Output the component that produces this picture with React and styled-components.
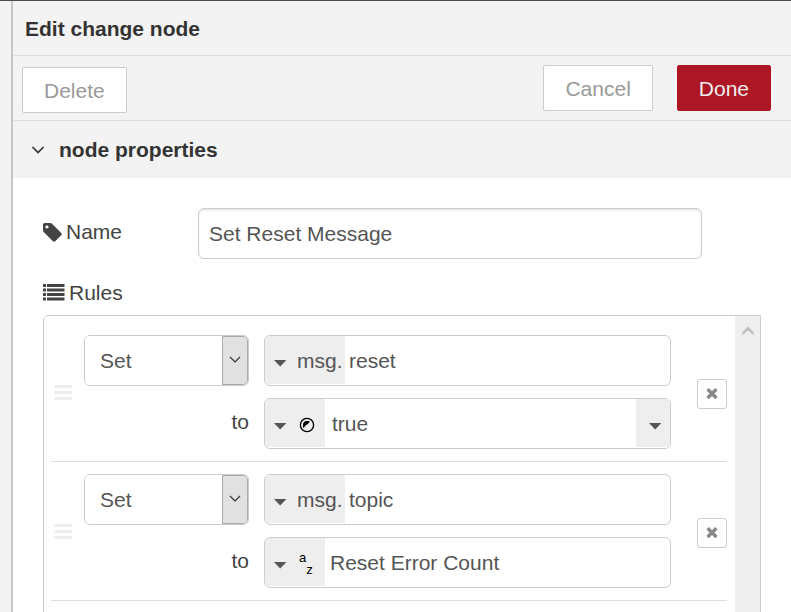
import React, { useState } from "react";
import styled, { createGlobalStyle } from "styled-components";

const GlobalStyle = createGlobalStyle`
  *, *::before, *::after { box-sizing: border-box; }
  body {
    margin: 0;
    background: #fff;
    color: #444;
    font-family: "Liberation Sans", Arial, Helvetica, sans-serif;
    font-size: 21px;
    line-height: 30px;
  }
  button, input, select { font: inherit; color: inherit; margin: 0; }
`;

const Page = styled.div`
  display: flex;
  height: 100vh;
  overflow: hidden;
  border-top: 1px solid #504b50;
`;

const Gutter = styled.div`
  flex: none;
  width: 13px;
  background: #f2f2f2;
  border-right: 2px solid #c6c6c6;
`;

const Tray = styled.main`
  flex: 1;
  min-width: 0;
`;

const TrayHeader = styled.h1`
  margin: 0;
  padding: 13px 12px 11px;
  background: #f3f3f3;
  border-bottom: 1px solid #ddd;
  color: #333;
  font-size: 21px;
  line-height: 30px;
`;

const Toolbar = styled.div`
  display: flex;
  justify-content: space-between;
  align-items: flex-end;
  padding: 9px 20px 7px 9px;
  background: #f3f3f3;
  border-bottom: 1px solid #ddd;
`;

const ToolbarGroup = styled.div`
  display: flex;
  gap: 24px;
  padding-bottom: 2px;
`;

const ToolbarButton = styled.button`
  height: 46px;
  padding: 1px 21px 0;
  border: 1px solid ${(p) => (p.$primary ? "#ad1625" : "#ccc")};
  border-radius: 2px;
  background: ${(p) => (p.$primary ? "#ad1625" : "#fff")};
  color: ${(p) => (p.$primary ? "#eee" : "#999")};
  cursor: pointer;
`;

const SectionToggle = styled.button`
  display: flex;
  align-items: center;
  gap: 14px;
  width: 100%;
  height: 57px;
  padding: 0 18px;
  border: 0;
  background: #f3f3f3;
  color: #333;
  font-weight: bold;
  text-align: left;
  cursor: pointer;
`;

const Form = styled.form`
  padding: 30px 30px 0;
`;

const FormRow = styled.div`
  display: flex;
  justify-content: space-between;
  padding-right: 59px;
`;

const FieldLabel = styled.label`
  display: flex;
  align-items: center;
  gap: 4px;
  height: 48px;
`;

const NameInput = styled.input`
  width: 504px;
  max-width: 78%;
  height: 51px;
  padding: 0 10px;
  border: 1px solid #ccc;
  border-radius: 6px;
  box-shadow: inset 0 2px 2px rgba(0, 0, 0, 0.08);
  color: #555;
  outline: none;
`;

const RulesTitle = styled.h2`
  display: flex;
  align-items: center;
  gap: 4px;
  margin: 19px 0 7px;
  font-size: 21px;
  font-weight: normal;
  line-height: 30px;
`;

const RulesBox = styled.div`
  display: flex;
  border: 1px solid #ccc;
  border-radius: 6px 0 0 6px;
  min-height: 400px;
`;

const RuleList = styled.ol`
  flex: 1;
  min-width: 0;
  margin: 0;
  padding: 7px 8px 7px 7px;
  list-style: none;
`;

const ScrollTrack = styled.div`
  flex: none;
  display: flex;
  justify-content: center;
  align-items: flex-start;
  width: 25px;
  padding-top: 9px;
  background: #efefef;
`;

const Rule = styled.li`
  display: grid;
  grid-template-columns: 18px 165px minmax(0, 1fr) 30px;
  align-items: center;
  padding: 12px 0 12px 3px;
  border-bottom: 1px solid #ddd;
`;

const Handle = styled.span`
  display: grid;
  gap: 3px;
  cursor: move;

  i {
    height: 3px;
    background: #eee;
  }
`;

const RuleAction = styled.div`
  display: grid;
  gap: 12px;
  margin: 0 -12px 0 12px;
`;

const RuleTargets = styled.div`
  display: grid;
  gap: 12px;
  margin: 0 26px 0 27px;
`;

const SelectFrame = styled.div`
  display: grid;
  grid-template-columns: 1fr 26px;
  height: 51px;
  border: 1px solid #ccc;
  border-radius: 6px;
  overflow: hidden;
`;

const Select = styled.select`
  grid-area: 1 / 1 / 2 / 3;
  appearance: none;
  padding: 0 42px 0 15px;
  border: 0;
  background: #fff;
  color: #555;
  outline: none;
`;

const SelectArrow = styled.span`
  grid-area: 1 / 2;
  display: grid;
  place-items: center;
  border: 1px solid #aaa;
  border-radius: 0 4px 4px 0;
  background: #e1e1e1;
  pointer-events: none;
`;

const ToLabel = styled.label`
  height: 51px;
  line-height: 47px;
  text-align: right;
`;

const TypedField = styled.div`
  display: flex;
  height: 51px;
  padding-bottom: 1px;
  border: 1px solid #ccc;
  border-radius: 6px;
  overflow: hidden;
`;

const TypeButton = styled.button`
  flex: none;
  display: flex;
  align-items: center;
  gap: ${(p) => (p.$icon ? 12 : 10)}px;
  width: ${(p) => (p.$icon ? 60 : 80)}px;
  padding: ${(p) => (p.$icon ? 4 : 2)}px 0 0 9px;
  border: 0;
  background: #eee;
  color: #555;
  cursor: pointer;
`;

const TypedInput = styled.input`
  flex: 1;
  min-width: 0;
  padding: 1px ${(p) => (p.$inset)}px 0;
  border: 0;
  background: none;
  color: #555;
  outline: none;
`;

const ValueButton = styled.button`
  flex: 1;
  padding: 1px 7px 0;
  border: 0;
  background: #fff;
  color: #555;
  text-align: left;
`;

const OptionButton = styled.button`
  flex: none;
  display: grid;
  place-items: center;
  width: 34px;
  padding: 4px 0 0 4px;
  border: 0;
  background: #eee;
  color: #555;
`;

const RemoveButton = styled.button`
  display: grid;
  place-items: center;
  width: 30px;
  height: 30px;
  margin-top: 3px;
  padding: 0 1px 1px 0;
  border: 1px solid #ccc;
  border-radius: 3px;
  background: #fff;
  color: #888;
  cursor: pointer;
`;

const Drawing = styled.svg`
  display: block;
  flex: none;
`;

const CaretDrawing = styled(Drawing)`
  margin-top: ${(p) => (p.$lift ? 1 : 3)}px;
`;

const Caret = ({ lift }) => (
  <CaretDrawing $lift={lift} width="13" height="8" viewBox="0 0 13 8" aria-hidden="true">
    <path d="M0 1h12.400L6.200 7.600z" fill="currentColor" />
  </CaretDrawing>
);

const TagIcon = () => (
  <Drawing width="19" height="19" viewBox="128 128 1536 1536" aria-hidden="true">
    <path
      fill="currentColor"
      d="M576 448q0-53-37.5-90.5t-90.5-37.5-90.5 37.5-37.5 90.5 37.5 90.5 90.5 37.5 90.5-37.5 37.5-90.5zm1067 576q0 53-37 90l-491 492q-39 37-91 37-53 0-90-37l-715-716q-38-37-64.5-101t-26.5-117v-416q0-52 38-90t90-38h416q53 0 117 26.5t102 64.5l715 714q37 39 37 91z"
    />
  </Drawing>
);

const ListIcon = () => (
  <Drawing width="22" height="20" viewBox="0 0 22 20" aria-hidden="true">
    <path
      fill="currentColor"
      d="M0 1h3v3H0zM4 1h17.500v3H4zM0 5.500h3v3H0zM4 5.500h17.500v3H4zM0 10h3v3H0zM4 10h17.500v3H4zM0 14.500h3v3H0zM4 14.500h17.500v3H4z"
    />
  </Drawing>
);

const CrossIcon = () => (
  <Drawing width="16" height="16" viewBox="0 0 1792 1792" aria-hidden="true">
    <path
      fill="currentColor"
      d="M1490 1322q0 40-28 68l-136 136q-28 28-68 28t-68-28l-294-294-294 294q-28 28-68 28t-68-28l-136-136q-28-28-28-68t28-68l294-294-294-294q-28-28-28-68t28-68l136-136q28-28 68-28t68 28l294 294 294-294q28-28 68-28t68 28l136 136q28 28 28 68t-28 68l-294 294 294 294q28 28 28 68z"
    />
  </Drawing>
);

const SectionChevron = () => (
  <Drawing width="14" height="10" viewBox="0 0 14 10" aria-hidden="true">
    <path d="M1.500 2 7 7.500 12.500 2" fill="none" stroke="currentColor" strokeWidth="1.700" />
  </Drawing>
);

const SelectChevron = () => (
  <Drawing width="12" height="10" viewBox="0 0 12 10" aria-hidden="true">
    <path d="M1 1 6 6l5-5" fill="none" stroke="#333" strokeWidth="1.200" />
  </Drawing>
);

const ScrollChevron = () => (
  <Drawing width="12" height="12" viewBox="0 0 12 12" aria-hidden="true">
    <path d="M.5 10.500V7L6 1.500 11.500 7v3.500L6 5.300z" fill="#bfbfbf" />
  </Drawing>
);

const BooleanIcon = () => (
  <Drawing width="16" height="16" viewBox="0 0 16 16" aria-hidden="true">
    <circle cx="8" cy="8" r="6.600" fill="none" stroke="#000" strokeWidth="1.300" />
    <path d="M4 11V8q0-4 4-4h3l-2 3-2 1-1 1.500z" fill="#000" />
  </Drawing>
);

const StringGlyph = styled.span`
  display: grid;
  grid-template-columns: 7px 7px;
  grid-template-rows: 12px 12px;
  color: #000;
  font-size: 13px;
  line-height: 12px;

  span:last-child { grid-area: 2 / 2; }
`;

const StringIcon = () => (
  <StringGlyph>
    <span>a</span>
    <span>z</span>
  </StringGlyph>
);

function ValueField({ id, rule }) {
  const [value, setValue] = useState(rule.value);
  if (rule.type === "bool") {
    return (
      <TypedField>
        <TypeButton type="button" $icon aria-label="Value type: boolean">
          <Caret lift />
          <BooleanIcon />
        </TypeButton>
        <ValueButton type="button" id={id}>{value}</ValueButton>
        <OptionButton
          type="button"
          aria-label="Toggle value"
          onClick={() => setValue(value === "true" ? "false" : "true")}
        >
          <Caret lift />
        </OptionButton>
      </TypedField>
    );
  }
  return (
    <TypedField>
      <TypeButton type="button" $icon aria-label="Value type: string">
        <Caret lift />
        <StringIcon />
      </TypeButton>
      <TypedInput id={id} $inset={5} value={value} onChange={(e) => setValue(e.target.value)} />
    </TypedField>
  );
}

function RuleRow({ rule, onRemove }) {
  const valueId = `value-${rule.id}`;
  return (
    <Rule>
      <Handle><i /><i /><i /></Handle>
      <RuleAction>
        <SelectFrame>
          <Select aria-label="Action" defaultValue="Set">
            <option>Set</option>
            <option>Change</option>
            <option>Delete</option>
            <option>Move</option>
          </Select>
          <SelectArrow><SelectChevron /></SelectArrow>
        </SelectFrame>
        <ToLabel htmlFor={valueId}>to</ToLabel>
      </RuleAction>
      <RuleTargets>
        <TypedField>
          <TypeButton type="button">
            <Caret />
            <span>msg.</span>
          </TypeButton>
          <TypedInput aria-label="Property" $inset={4} defaultValue={rule.property} />
        </TypedField>
        <ValueField id={valueId} rule={rule} />
      </RuleTargets>
      <RemoveButton type="button" aria-label="Remove rule" onClick={onRemove}>
        <CrossIcon />
      </RemoveButton>
    </Rule>
  );
}

const initialRules = [
  { id: 1, property: "reset", type: "bool", value: "true" },
  { id: 2, property: "topic", type: "str", value: "Reset Error Count" },
];

export default function App() {
  const [rules, setRules] = useState(initialRules);
  const [open, setOpen] = useState(true);
  return (
    <>
      <GlobalStyle />
      <Page>
        <Gutter />
        <Tray>
          <TrayHeader>Edit change node</TrayHeader>
          <Toolbar>
            <ToolbarButton type="button">Delete</ToolbarButton>
            <ToolbarGroup>
              <ToolbarButton type="button">Cancel</ToolbarButton>
              <ToolbarButton type="button" $primary>Done</ToolbarButton>
            </ToolbarGroup>
          </Toolbar>
          <SectionToggle type="button" aria-expanded={open} onClick={() => setOpen(!open)}>
            <SectionChevron />
            node properties
          </SectionToggle>
          {open && (
            <Form>
              <FormRow>
                <FieldLabel htmlFor="node-name"><TagIcon />Name</FieldLabel>
                <NameInput id="node-name" defaultValue="Set Reset Message" />
              </FormRow>
              <RulesTitle><ListIcon />Rules</RulesTitle>
              <RulesBox>
                <RuleList>
                  {rules.map((rule) => (
                    <RuleRow
                      key={rule.id}
                      rule={rule}
                      onRemove={() => setRules(rules.filter((r) => r.id !== rule.id))}
                    />
                  ))}
                </RuleList>
                <ScrollTrack><ScrollChevron /></ScrollTrack>
              </RulesBox>
            </Form>
          )}
        </Tray>
      </Page>
    </>
  );
}
